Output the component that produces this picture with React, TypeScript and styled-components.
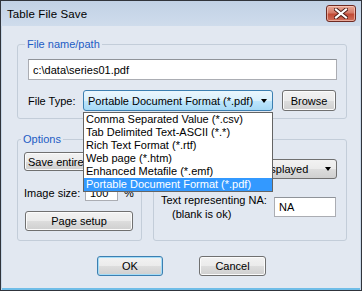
import { createGlobalStyle } from "styled-components";
import styled from "styled-components";

const GlobalStyle = createGlobalStyle`
  html, body {
    margin: 0;
    padding: 0;
    background: #ffffff;
  }
  body {
    font-family: "Liberation Sans", Arial, sans-serif;
    font-size: 11px;
    color: #000;
  }
`;

const Window = styled.div`
  position: relative;
  width: 362px;
  height: 291px;
  box-sizing: border-box;
  display: flex;
  flex-direction: column;
  background: #e2e8f1;
  border: 1px solid #30343b;
  box-shadow: inset 1px 0 0 #c7d7e8, inset -1px 0 0 #c7d7e8, inset 0 -2px 0 #6fbde8;
`;

const TitleBar = styled.div`
  height: 25px;
  flex: none;
  display: flex;
  align-items: center;
  justify-content: space-between;
  padding: 0 5px 0 6px;
  background: linear-gradient(#c1d1e5, #cfdcec);
`;

const Title = styled.div`
  font-size: 11.5px;
  color: #000;
  letter-spacing: 0.1px;
`;

const CloseButton = styled.div`
  width: 30px;
  height: 17px;
  box-sizing: border-box;
  border: 1px solid #6e2a22;
  border-radius: 3px;
  background: linear-gradient(#e9a896 0%, #d57b69 45%, #c14a35 55%, #d0705c 100%);
  box-shadow: inset 0 0 0 1px rgba(255, 220, 210, 0.55);
  display: flex;
  align-items: center;
  justify-content: center;
`;

const Client = styled.div`
  flex: 1;
  display: flex;
  flex-direction: column;
  padding: 12px 14px 0 16px;
`;

const Group = styled.fieldset<{ $pad: string }>`
  margin: 0;
  min-width: 0;
  border: 1px solid #c3cdd9;
  border-radius: 3px;
  padding: ${({ $pad }) => $pad};
`;

const Legend = styled.legend`
  color: #1d5cc4;
  line-height: 13px;
  padding: 0 2px;
  margin-left: -3px;
`;

const Row = styled.div<{ $gap?: number; $mt?: number }>`
  display: flex;
  align-items: center;
  gap: ${({ $gap }) => $gap ?? 0}px;
  margin-top: ${({ $mt }) => $mt ?? 0}px;
`;

const TextBox = styled.input<{ $w: number; $h: number }>`
  width: ${({ $w }) => $w}px;
  height: ${({ $h }) => $h}px;
  box-sizing: border-box;
  font: inherit;
  color: #000;
  background: #fff;
  border: 1px solid #abadb3;
  border-top-color: #8f9399;
  border-radius: 0;
  padding: 0 4px;
  outline: none;
`;

const Label = styled.span<{ $w?: number }>`
  display: inline-block;
  width: ${({ $w }) => ($w ? `${$w}px` : "auto")};
  flex: none;
  white-space: nowrap;
`;

const ComboWrap = styled.div`
  position: relative;
  flex: none;
`;

const Combo = styled.div<{ $w: number; $h: number; $focus?: boolean }>`
  width: ${({ $w }) => $w}px;
  height: ${({ $h }) => $h}px;
  box-sizing: border-box;
  display: flex;
  align-items: center;
  justify-content: space-between;
  padding: 0 5px 0 4px;
  border: 1px solid ${({ $focus }) => ($focus ? "#3c7fb1" : "#707070")};
  border-radius: 3px;
  background: ${({ $focus }) =>
    $focus
      ? "linear-gradient(#eaf6fd 0%, #d9f0fc 50%, #bee6fd 51%, #a7d9f5 100%)"
      : "linear-gradient(#f2f2f2 0%, #ebebeb 50%, #dddddd 51%, #cfcfcf 100%)"};
  white-space: nowrap;
  overflow: hidden;
`;

const Arrow = styled.span`
  flex: none;
  width: 0;
  height: 0;
  border-left: 3.5px solid transparent;
  border-right: 3.5px solid transparent;
  border-top: 4px solid #000;
  margin-left: 6px;
`;

const DropList = styled.div`
  position: absolute;
  top: 100%;
  left: 0;
  width: 190px;
  box-sizing: border-box;
  margin-top: 1px;
  background: #fff;
  border: 1px solid #646464;
  z-index: 5;
`;

const DropItem = styled.div<{ $sel?: boolean }>`
  height: 13px;
  line-height: 13px;
  padding-left: 2px;
  white-space: nowrap;
  color: ${({ $sel }) => ($sel ? "#fff" : "#000")};
  background: ${({ $sel }) => ($sel ? "#3399ff" : "transparent")};
`;

const Button = styled.button<{ $w: number; $h?: number; $default?: boolean; $left?: boolean }>`
  width: ${({ $w }) => $w}px;
  height: ${({ $h }) => $h ?? 20}px;
  box-sizing: border-box;
  flex: none;
  font: inherit;
  color: #000;
  padding: ${({ $left }) => ($left ? "0 0 0 3px" : "0")};
  border: 1px solid ${({ $default }) => ($default ? "#3c7fb1" : "#707070")};
  border-radius: 3px;
  background: linear-gradient(#f2f2f2 0%, #ebebeb 50%, #dddddd 51%, #cfcfcf 100%);
  box-shadow: inset 0 0 0 1px ${({ $default }) => ($default ? "#a4dcf7" : "#fbfbfb")};
  text-align: ${({ $left }) => ($left ? "left" : "center")};
  white-space: nowrap;
  overflow: hidden;
`;

const LowerGrid = styled.div`
  display: grid;
  grid-template-columns: 125px 194px;
  column-gap: 11px;
  margin-top: 14px;
`;

const NaLabel = styled.div`
  flex: none;
  width: 113px;
  line-height: 14px;
  white-space: nowrap;
`;

const NaSub = styled.div`
  padding-left: 11px;
`;

const ButtonBar = styled.div`
  display: flex;
  justify-content: center;
  gap: 36px;
  margin-top: 15px;
  padding-right: 1px;
`;

const fileTypes = [
  "Comma Separated Value (*.csv)",
  "Tab Delimited Text-ASCII (*.*)",
  "Rich Text Format (*.rtf)",
  "Web page (*.htm)",
  "Enhanced Metafile (*.emf)",
  "Portable Document Format (*.pdf)",
];

export default function App() {
  return (
    <>
      <GlobalStyle />
      <Window>
        <TitleBar>
          <Title>Table File Save</Title>
          <CloseButton>
            <svg width="14" height="11" viewBox="0 0 14 11">
              <path
                d="M2 1.5 L12 9.5 M12 1.5 L2 9.5"
                stroke="#4a1a14"
                strokeWidth="4"
                strokeLinecap="square"
              />
              <path
                d="M2 1.5 L12 9.5 M12 1.5 L2 9.5"
                stroke="#ffffff"
                strokeWidth="2.2"
                strokeLinecap="square"
              />
            </svg>
          </CloseButton>
        </TitleBar>
        <Client>
          <Group $pad="8px 9px 7px 10px">
            <Legend>File name/path</Legend>
            <TextBox $w={309} $h={21} defaultValue="c:\data\series01.pdf" readOnly />
            <Row $mt={10}>
              <Label $w={55}>File Type:</Label>
              <ComboWrap>
                <Combo $w={190} $h={21} $focus>
                  <span>Portable Document Format (*.pdf)</span>
                  <Arrow />
                </Combo>
                <DropList>
                  {fileTypes.map((t, i) => (
                    <DropItem key={t} $sel={i === fileTypes.length - 1}>
                      {t}
                    </DropItem>
                  ))}
                </DropList>
              </ComboWrap>
              <Button $w={54} $h={21} style={{ marginLeft: 9 }}>
                Browse
              </Button>
            </Row>
          </Group>
          <LowerGrid>
            <Group $pad="6px 7px 9px 6px">
              <Legend>Options</Legend>
              <Button $w={109} $h={19} $left>
                Save entire table
              </Button>
              <Row $mt={13}>
                <Label $w={61}>Image size:</Label>
                <TextBox $w={33} $h={17} defaultValue="100" readOnly />
                <Label style={{ marginLeft: 6 }}>%</Label>
              </Row>
              <Row $mt={10}>
                <Button $w={108} style={{ marginLeft: 1 }}>
                  Page setup
                </Button>
              </Row>
            </Group>
            <Group $pad="13px 10px 9px 7px">
              <Legend>Display</Legend>
              <Combo $w={176} $h={20}>
                <span>Values as currently displayed</span>
                <Arrow />
              </Combo>
              <Row $mt={14}>
                <NaLabel>
                  Text representing NA:
                  <NaSub>(blank is ok)</NaSub>
                </NaLabel>
                <TextBox $w={62} $h={20} defaultValue="NA" readOnly />
              </Row>
            </Group>
          </LowerGrid>
          <ButtonBar>
            <Button $w={66} $default>
              OK
            </Button>
            <Button $w={67}>Cancel</Button>
          </ButtonBar>
        </Client>
      </Window>
    </>
  );
}
